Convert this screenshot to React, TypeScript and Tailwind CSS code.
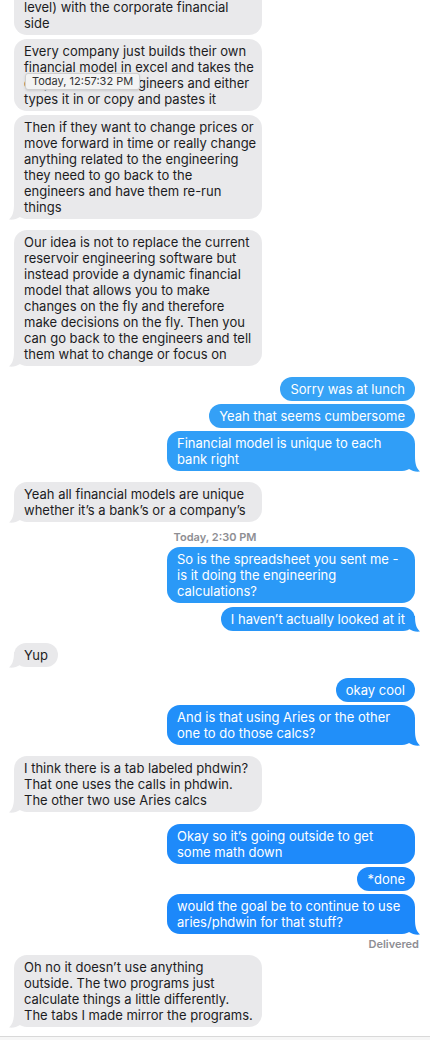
import React from 'react'

type Msg = {
  kind: 'in' | 'out' | 'stamp' | 'status'
  lines: string[]
  tail?: boolean
  mt: string
  shade?: string
  color?: string
}

const messages: Msg[] = [
  { kind: 'in', lines: ['level) with the corporate financial', 'side'], mt: 'mt-[-21px]' },
  {
    kind: 'in',
    lines: [
      'Every company just builds their own',
      'financial model in excel and takes the',
      'output from the engineers and either',
      'types it in or copy and pastes it',
    ],
    mt: 'mt-1',
  },
  {
    kind: 'in',
    tail: true,
    lines: [
      'Then if they want to change prices or',
      'move forward in time or really change',
      'anything related to the engineering',
      'they need to go back to the',
      'engineers and have them re-run',
      'things',
    ],
    mt: 'mt-1',
  },
  {
    kind: 'in',
    tail: true,
    lines: [
      'Our idea is not to replace the current',
      'reservoir engineering software but',
      'instead provide a dynamic financial',
      'model that allows you to make',
      'changes on the fly and therefore',
      'make decisions on the fly. Then you',
      'can go back to the engineers and tell',
      'them what to change or focus on',
    ],
    mt: 'mt-[11px]',
  },
  { kind: 'out', lines: ['Sorry was at lunch'], mt: 'mt-[11px]', shade: 'bg-[#37a3f6]' },
  { kind: 'out', lines: ['Yeah that seems cumbersome'], mt: 'mt-[3px]', shade: 'bg-[#34a0f6]' },
  {
    kind: 'out',
    tail: true,
    lines: ['Financial model is unique to each', 'bank right'],
    mt: 'mt-[3px]',
    shade: 'bg-[#309ef7]',
    color: '#309ef7',
  },
  {
    kind: 'in',
    tail: true,
    lines: ['Yeah all financial models are unique', 'whether it\u2019s a bank\u2019s or a company\u2019s'],
    mt: 'mt-[11px]',
  },
  { kind: 'stamp', lines: ['Today, 2:30 PM'], mt: 'mt-[8px]' },
  {
    kind: 'out',
    lines: ['So is the spreadsheet you sent me -', 'is it doing the engineering', 'calculations?'],
    mt: 'mt-[3px]',
    shade: 'bg-[#2a99f7]',
  },
  {
    kind: 'out',
    tail: true,
    lines: ['I haven\u2019t actually looked at it'],
    mt: 'mt-1',
    shade: 'bg-[#2896f8]',
    color: '#2896f8',
  },
  { kind: 'in', tail: true, lines: ['Yup'], mt: 'mt-3' },
  { kind: 'out', lines: ['okay cool'], mt: 'mt-[11px]', shade: 'bg-[#2291f8]' },
  {
    kind: 'out',
    tail: true,
    lines: ['And is that using Aries or the other', 'one to do those calcs?'],
    mt: 'mt-[3px]',
    shade: 'bg-[#218ff9]',
    color: '#218ff9',
  },
  {
    kind: 'in',
    tail: true,
    lines: ['I think there is a tab labeled phdwin?', 'That one uses the calls in phdwin.', 'The other two use Aries calcs'],
    mt: 'mt-[11px]',
  },
  {
    kind: 'out',
    lines: ['Okay so it\u2019s going outside to get', 'some math down'],
    mt: 'mt-3',
    shade: 'bg-[#1e8afa]',
  },
  { kind: 'out', lines: ['*done'], mt: 'mt-[3px]', shade: 'bg-[#1d89fa]' },
  {
    kind: 'out',
    tail: true,
    lines: ['would the goal be to continue to use', 'aries/phdwin for that stuff?'],
    mt: 'mt-[3px]',
    shade: 'bg-[#1c88fa]',
    color: '#1c88fa',
  },
  { kind: 'status', lines: ['Delivered'], mt: 'mt-[3px]' },
  {
    kind: 'in',
    tail: true,
    lines: [
      'Oh no it doesn\u2019t use anything',
      'outside. The two programs just',
      'calculate things a little differently.',
      'The tabs I made mirror the programs.',
    ],
    mt: 'mt-1',
  },
]

function Tail({ side, color }: { side: 'left' | 'right'; color: string }) {
  if (side === 'right') {
    return (
      <svg className="absolute bottom-[-1px] right-[-5px]" width="14" height="16" viewBox="0 0 14 16">
        <path d="M0 0 H9 C9 7 10 12 14 15.5 C10 16 6 15 3 13 L0 13 Z" fill={color} />
      </svg>
    )
  }
  return (
    <svg className="absolute bottom-[-1px] left-[-5px]" width="14" height="16" viewBox="0 0 14 16">
      <path d="M14 0 H5 C5 7 4 12 0 15.5 C4 16 8 15 11 13 L14 13 Z" fill={color} />
    </svg>
  )
}

function Bubble({ m, index }: { m: Msg; index: number }) {
  if (m.kind === 'stamp') {
    return (
      <div className={`${m.mt} text-center text-[11px] leading-[14px] font-semibold text-[#8e8e93]`}>
        {m.lines[0]}
      </div>
    )
  }
  if (m.kind === 'status') {
    return (
      <div className={`${m.mt} pr-[11px] text-right text-[11px] leading-[14px] font-semibold text-[#8e8e93]`}>
        {m.lines[0]}
      </div>
    )
  }
  const multi = m.lines.length > 1
  const incoming = m.kind === 'in'
  const clipped = index === 0
  return (
    <div className={`${m.mt} flex ${incoming ? 'justify-start pl-[14px]' : 'justify-end pr-[15px]'}`}>
      <div
        className={`relative rounded-[13px] px-[10px] ${clipped ? 'pt-5 pb-1' : 'py-1'} text-[13px] leading-4 ${
          multi ? 'w-[248px]' : ''
        } ${incoming ? 'bg-[#e9e9eb] text-[#1c1c1e]' : `${m.shade} text-white`}`}
      >
        {m.lines.map((l, i) => (
          <div key={i} className="whitespace-nowrap">
            {l}
          </div>
        ))}
        {m.tail && <Tail side={incoming ? 'left' : 'right'} color={incoming ? '#e9e9eb' : m.color ?? '#1c88fa'} />}
        {index === 1 && (
          <div className="absolute left-[11px] top-[34px] rounded-[3px] border border-[#cfcfcf] bg-[#f3f3f3] px-[6px] text-[11px] leading-[15px] text-[#333] shadow-sm">
            Today, 12:57:32 PM
          </div>
        )}
      </div>
    </div>
  )
}

export default function App() {
  return (
    <div
      className="relative h-[1040px] w-[430px] overflow-hidden bg-white"
      style={{ fontFamily: 'Inter, "Noto Sans", sans-serif' }}
    >
      <div className="flex flex-col">
        {messages.map((m, i) => (
          <Bubble key={i} m={m} index={i} />
        ))}
      </div>
      <div className="absolute bottom-0 left-0 right-0 h-[4px] border-t border-[#d9d9d9] bg-[#f6f6f6]" />
    </div>
  )
}
